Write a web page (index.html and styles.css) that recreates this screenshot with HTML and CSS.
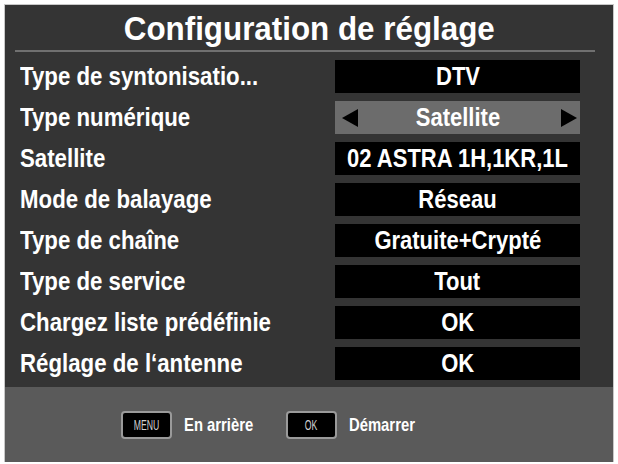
FILE: index.html
```html
<!DOCTYPE html>
<html lang="fr">
<head>
<meta charset="utf-8">
<title>Configuration de réglage</title>
<link rel="stylesheet" href="styles.css">
</head>
<body>
<div class="panel">
  <div class="header">
    <h1 class="title"><span class="txt">Configuration de réglage</span></h1>
  </div>
  <div class="separator"></div>
  <div class="list">
    <div class="row"><span class="label"><span class="txt">Type de syntonisatio...</span></span><span class="value"><span class="txt">DTV</span></span></div>
    <div class="row"><span class="label"><span class="txt">Type numérique</span></span><span class="value active"><span class="arrow left"></span><span class="txt">Satellite</span><span class="arrow right"></span></span></div>
    <div class="row"><span class="label"><span class="txt">Satellite</span></span><span class="value"><span class="txt">02 ASTRA 1H,1KR,1L</span></span></div>
    <div class="row"><span class="label"><span class="txt">Mode de balayage</span></span><span class="value"><span class="txt">Réseau</span></span></div>
    <div class="row"><span class="label"><span class="txt">Type de chaîne</span></span><span class="value"><span class="txt">Gratuite+Crypté</span></span></div>
    <div class="row"><span class="label"><span class="txt">Type de service</span></span><span class="value"><span class="txt">Tout</span></span></div>
    <div class="row"><span class="label"><span class="txt">Chargez liste prédéfinie</span></span><span class="value"><span class="txt">OK</span></span></div>
    <div class="row"><span class="label"><span class="txt">Réglage de l‘antenne</span></span><span class="value"><span class="txt">OK</span></span></div>
  </div>
  <div class="footer">
    <span class="key"><span class="txt">MENU</span></span><span class="hint"><span class="txt">En arrière</span></span>
    <span class="key"><span class="txt">OK</span></span><span class="hint"><span class="txt">Démarrer</span></span>
  </div>
</div>
</body>
</html>
```

FILE: styles.css
```css
html, body {
  margin: 0;
  padding: 0;
  background: #ffffff;
}
body {
  font-family: "Liberation Sans", Arial, sans-serif;
  font-weight: bold;
  color: #ffffff;
}
.txt {
  display: inline-block;
  white-space: nowrap;
}
.panel {
  margin: 5px 0 0 5px;
  width: 608px;
  height: 457px;
  background: #343434;
  box-shadow: 0 0 0 1px #c8c8c8;
  display: flex;
  flex-direction: column;
}
.header {
  height: 45px;
  display: flex;
  align-items: center;
  justify-content: center;
}
.title {
  margin: 0;
  font-size: 33px;
  font-weight: bold;
  line-height: 1;
  padding-top: 2px;
}
.title .txt {
  transform: scaleX(0.95);
}
.separator {
  height: 2px;
  margin: 0 18px 0 10px;
  background: #707070;
}
.list {
  display: flex;
  flex-direction: column;
  gap: 8px;
  padding-top: 8px;
}
.row {
  display: flex;
  align-items: center;
  height: 33px;
}
.label {
  width: 315px;
  padding-left: 15px;
  font-size: 25px;
  line-height: 33px;
  white-space: nowrap;
}
.label .txt {
  transform: scaleX(0.89);
  transform-origin: left center;
}
.value {
  width: 245px;
  height: 33px;
  background: #000000;
  display: flex;
  align-items: center;
  justify-content: center;
  font-size: 25px;
  position: relative;
  white-space: nowrap;
}
.value .txt {
  transform: scaleX(0.88);
}
.value.active {
  background: #6c6c6c;
}
.arrow {
  position: absolute;
  top: 8px;
  width: 0;
  height: 0;
  border-top: 9px solid transparent;
  border-bottom: 9px solid transparent;
}
.arrow.left {
  left: 7px;
  border-right: 16px solid #000000;
}
.arrow.right {
  right: 3px;
  border-left: 16px solid #000000;
}
.footer {
  margin-top: auto;
  height: 75px;
  background: #5a5a5a;
  display: flex;
  align-items: center;
  padding-left: 116px;
}
.key {
  width: 47px;
  height: 24px;
  background: #000000;
  border: 2px solid #9a9a9a;
  border-radius: 4px;
  display: flex;
  align-items: center;
  justify-content: center;
  font-size: 14px;
  font-weight: normal;
  color: #d0d0d0;
}
.key .txt {
  transform: scaleX(0.62);
}
.hint {
  width: 102px;
  margin-left: 12px;
  font-size: 19px;
}
.hint .txt {
  transform: scaleX(0.78);
  transform-origin: left center;
}
```
